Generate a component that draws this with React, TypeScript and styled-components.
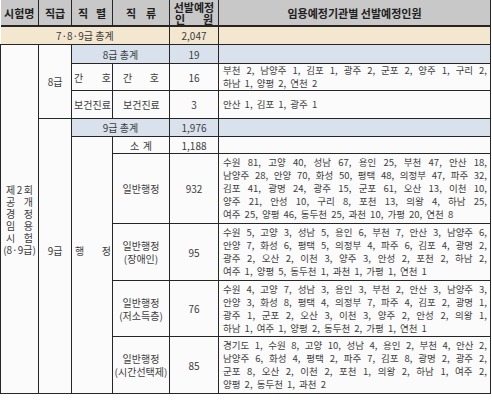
import React from 'react';
import styled, {createGlobalStyle} from 'styled-components';

const GlobalStyle = createGlobalStyle`
  html, body {
    margin: 0;
    padding: 0;
    background: #ffffff;
  }
  body {
    font-family: "Noto Sans CJK KR", "Noto Sans", sans-serif;
    color: #3a3a3a;
  }
`;

const LINE = '#262626';

const Table = styled.table`
  width: 491px;
  border-collapse: collapse;
  table-layout: fixed;
  font-size: 10px;
  line-height: 13px;
`;

const HeadCell = styled.th`
  background: #c8c8c8;
  border-left: 1px solid ${LINE};
  border-right: 1px solid ${LINE};
  border-bottom: 2px solid ${LINE};
  height: 25px;
  padding: 0 2px;
  font-size: 11px;
  line-height: 12px;
  font-weight: 600;
  color: #202020;
  vertical-align: middle;
  text-align: center;
  &:first-child {
    border-left: none;
  }
`;

type Tone = 'plain' | 'total' | 'sub';

const tones: Record<Tone, string> = {
  plain: '#fbfbfb',
  total: '#f3e7cf',
  sub: '#d9e2ec',
};

const Cell = styled.td<{$tone?: Tone; $align?: string; $pad?: string; $h?: number}>`
  background: ${(p) => tones[p.$tone || 'plain']};
  border: 1px solid ${LINE};
  padding: ${(p) => p.$pad || '0 2px'};
  text-align: ${(p) => p.$align || 'center'};
  vertical-align: middle;
  height: ${(p) => (p.$h ? `${p.$h}px` : 'auto')};
  color: #3c3c3c;
`;

const Spread = styled.div<{$w?: string}>`
  display: flex;
  justify-content: space-between;
  width: ${(p) => p.$w || 'auto'};
  margin: 0 auto;
`;

const Lines = styled.div`
  padding: 0 1px 0 2px;
  font-size: 9.5px;
  word-spacing: 2px;
  color: #404040;
`;

const Line = styled.div<{$last?: boolean}>`
  text-align: ${(p) => (p.$last ? 'left' : 'justify')};
  text-align-last: ${(p) => (p.$last ? 'left' : 'justify')};
  white-space: nowrap;
`;

const ExamName = styled.div`
  line-height: 12px;
  padding-top: 1px;
`;

const Lifted = styled.div<{$lift: number}>`
  padding-bottom: ${(p) => p.$lift}px;
`;

const Stack = styled.div`
  line-height: 12px;
`;

const chars = (s: string) => s.split('').map((c, i) => <span key={i}>{c}</span>);

const Places = ({lines}: {lines: string[]}) => (
  <Lines>
    {lines.map((l, i) => (
      <Line key={i} $last={i === lines.length - 1}>
        {l}
      </Line>
    ))}
  </Lines>
);

const nurse = [
  '부천 2, 남양주 1, 김포 1, 광주 2, 군포 2, 양주 1, 구리 2,',
  '하남 1, 양평 2, 연천 2',
];
const general = [
  '수원 81, 고양 40, 성남 67, 용인 25, 부천 47, 안산 18,',
  '남양주 28, 안양 70, 화성 50, 평택 48, 의정부 47, 파주 32,',
  '김포 41, 광명 24, 광주 15, 군포 61, 오산 13, 이천 10,',
  '양주 21, 안성 10, 구리 8, 포천 13, 의왕 4, 하남 25,',
  '여주 25, 양평 46, 동두천 25, 과천 10, 가평 20, 연천 8',
];
const disabled = [
  '수원 5, 고양 3, 성남 5, 용인 6, 부천 7, 안산 3, 남양주 6,',
  '안양 7, 화성 6, 평택 5, 의정부 4, 파주 6, 김포 4, 광명 2,',
  '광주 2, 오산 2, 이천 3, 양주 3, 안성 2, 포천 2, 하남 2,',
  '여주 1, 양평 5, 동두천 1, 과천 1, 가평 1, 연천 1',
];
const lowIncome = [
  '수원 4, 고양 7, 성남 3, 용인 3, 부천 2, 안산 3, 남양주 3,',
  '안양 3, 화성 8, 평택 4, 의정부 7, 파주 4, 김포 2, 광명 1,',
  '광주 1, 군포 2, 오산 3, 이천 3, 양주 2, 안성 2, 의왕 1,',
  '하남 1, 여주 1, 양평 2, 동두천 2, 가평 1, 연천 1',
];
const partTime = [
  '경기도 1, 수원 8, 고양 10, 성남 4, 용인 2, 부천 4, 안산 2,',
  '남양주 6, 화성 4, 평택 2, 파주 7, 김포 8, 광명 2, 광주 2,',
  '군포 8, 오산 2, 이천 2, 포천 1, 의왕 2, 하남 1, 여주 2,',
  '양평 2, 동두천 1, 과천 2',
];

export default function App() {
  return (
    <>
      <GlobalStyle />
      <Table>
        <colgroup>
          <col style={{width: 38}} />
          <col style={{width: 33}} />
          <col style={{width: 41}} />
          <col style={{width: 57}} />
          <col style={{width: 49}} />
          <col />
        </colgroup>
        <thead>
          <tr>
            <HeadCell>시험명</HeadCell>
            <HeadCell>직급</HeadCell>
            <HeadCell>
              <Spread $w="28px">{chars('직렬')}</Spread>
            </HeadCell>
            <HeadCell>
              <Spread $w="30px">{chars('직류')}</Spread>
            </HeadCell>
            <HeadCell>
              <Stack>
                <div>선발예정</div>
                <Spread $w="38px">{chars('인원')}</Spread>
              </Stack>
            </HeadCell>
            <HeadCell>임용예정기관별 선발예정인원</HeadCell>
          </tr>
        </thead>
        <tbody>
          <tr>
            <Cell $tone="total" colSpan={4} $h={17} style={{borderLeft: 'none'}}>
              7·8·9급 총계
            </Cell>
            <Cell $tone="total">2,047</Cell>
            <Cell $tone="total" />
          </tr>

          <tr>
            <Cell rowSpan={10}>
              <ExamName>
                <Spread $w="27px">{chars('제2회')}</Spread>
                <Spread $w="27px">{chars('공개')}</Spread>
                <Spread $w="27px">{chars('경정')}</Spread>
                <Spread $w="27px">{chars('임용')}</Spread>
                <Spread $w="27px">{chars('시험')}</Spread>
                <div>(8·9급)</div>
              </ExamName>
            </Cell>
            <Cell rowSpan={3}>8급</Cell>
            <Cell $tone="sub" colSpan={2} $h={18}>
              8급 총계
            </Cell>
            <Cell $tone="sub">19</Cell>
            <Cell $tone="sub" />
          </tr>
          <tr>
            <Cell $pad="0 1px 0 2px">
              <Spread>{chars('간호')}</Spread>
            </Cell>
            <Cell $pad="0 10px">
              <Spread>{chars('간호')}</Spread>
            </Cell>
            <Cell>16</Cell>
            <Cell $align="left" $h={26}>
              <Places lines={nurse} />
            </Cell>
          </tr>
          <tr>
            <Cell $pad="0 1px 0 2px">
              <Spread>{chars('보건진료')}</Spread>
            </Cell>
            <Cell $pad="0 10px">
              <Spread>{chars('보건진료')}</Spread>
            </Cell>
            <Cell>3</Cell>
            <Cell $align="left" $h={27}>
              <Places lines={['안산 1, 김포 1, 광주 1']} />
            </Cell>
          </tr>

          <tr>
            <Cell rowSpan={6}>
              <Lifted $lift={12}>9급</Lifted>
            </Cell>
            <Cell $tone="sub" colSpan={2} $h={17}>
              9급 총계
            </Cell>
            <Cell $tone="sub">1,976</Cell>
            <Cell $tone="sub" />
          </tr>
          <tr>
            <Cell rowSpan={5} $pad="0 1px 0 3px">
              <Lifted $lift={30}>
                <Spread>{chars('행정')}</Spread>
              </Lifted>
            </Cell>
            <Cell $h={16}>
              <Spread $w="22px">{chars('소계')}</Spread>
            </Cell>
            <Cell>1,188</Cell>
            <Cell />
          </tr>
          <tr>
            <Cell>일반행정</Cell>
            <Cell>932</Cell>
            <Cell $align="left" $h={69}>
              <Places lines={general} />
            </Cell>
          </tr>
          <tr>
            <Cell>
              <div>일반행정</div>
              <div>(장애인)</div>
            </Cell>
            <Cell>95</Cell>
            <Cell $align="left" $h={56}>
              <Places lines={disabled} />
            </Cell>
          </tr>
          <tr>
            <Cell>
              <div>일반행정</div>
              <div>(저소득층)</div>
            </Cell>
            <Cell>76</Cell>
            <Cell $align="left" $h={55}>
              <Places lines={lowIncome} />
            </Cell>
          </tr>
          <tr>
            <Cell $pad="0">
              <div>일반행정</div>
              <div>(시간선택제)</div>
            </Cell>
            <Cell>85</Cell>
            <Cell $align="left" $h={56}>
              <Places lines={partTime} />
            </Cell>
          </tr>
        </tbody>
      </Table>
    </>
  );
}
